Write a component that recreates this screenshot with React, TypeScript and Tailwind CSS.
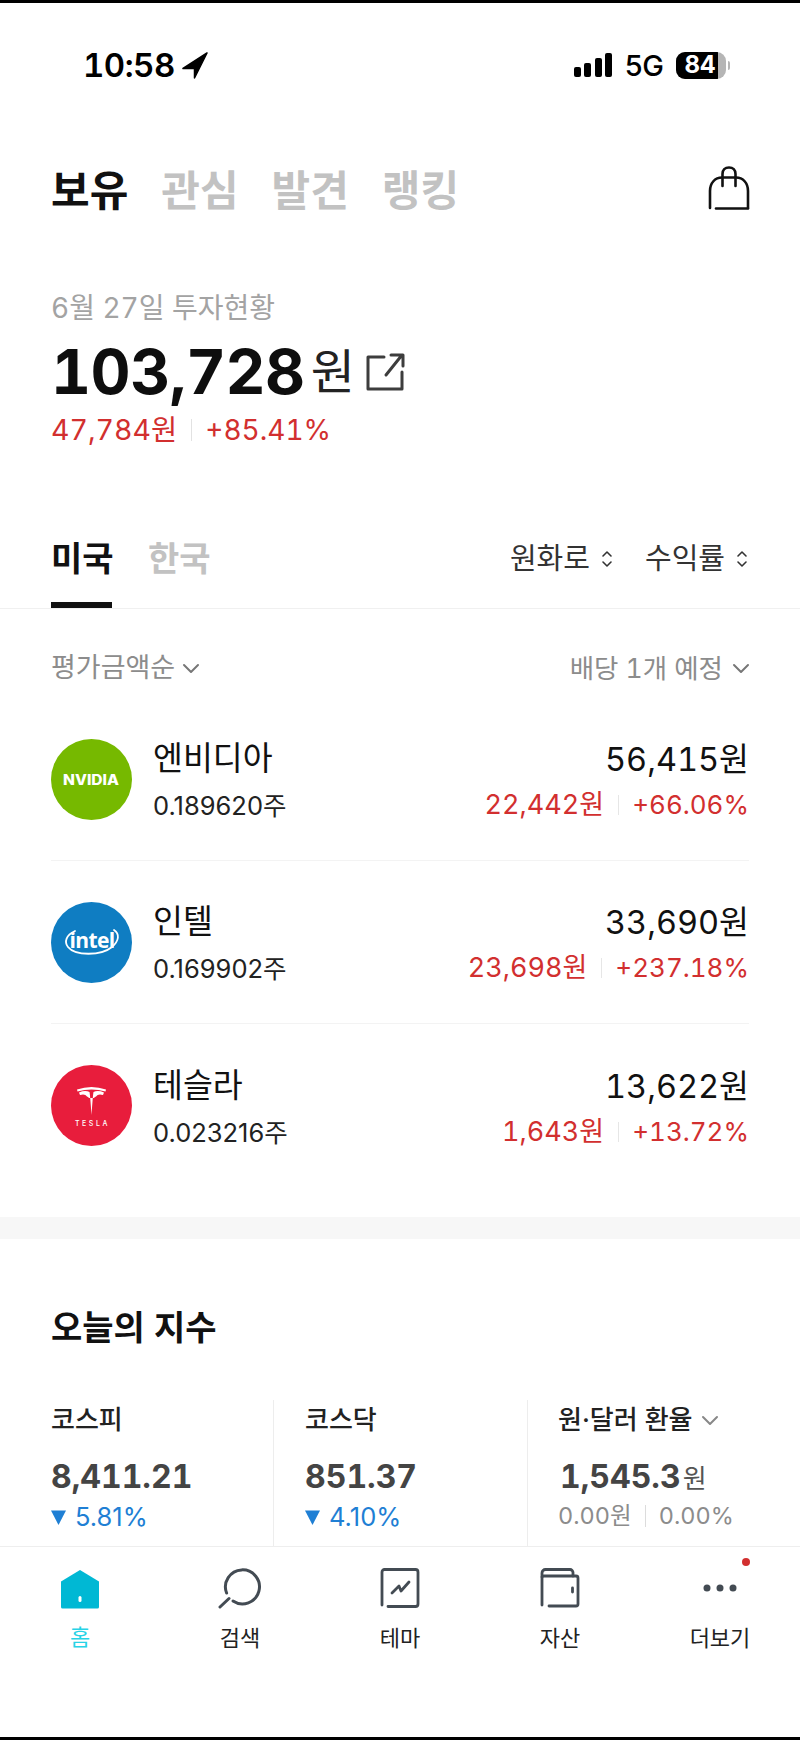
const holdings = [
  { logo: "nvidia", name: "엔비디아", qty: "0.189620주", value: "56,415원", profit: "22,442원", rate: "+66.06%" },
  { logo: "intel", name: "인텔", qty: "0.169902주", value: "33,690원", profit: "23,698원", rate: "+237.18%" },
  { logo: "tesla", name: "테슬라", qty: "0.023216주", value: "13,622원", profit: "1,643원", rate: "+13.72%" },
];

function Logo({ kind }: { kind: string }) {
  if (kind === "nvidia") {
    return (
      <svg width="81" height="81" viewBox="0 0 81 81" className="shrink-0">
        <circle cx="40.5" cy="40.5" r="40.5" fill="#76b900" />
        <text x="12" y="46" textLength="56" lengthAdjust="spacingAndGlyphs" fill="#fff" fontFamily="Inter" fontWeight="800" fontSize="14">
          NVIDIA
        </text>
      </svg>
    );
  }
  if (kind === "intel") {
    return (
      <svg width="81" height="81" viewBox="0 0 81 81" className="shrink-0">
        <circle cx="40.5" cy="40.5" r="40.5" fill="#0f7dc2" />
        <path d="M24 29C15 33 13 40 17 45C24 54 50 54 61 45C68 39 69 32 63 28" fill="none" stroke="#fff" strokeWidth="1.8" strokeLinecap="round" />
        <text x="41" y="46" textAnchor="middle" fill="#fff" fontFamily="Open Sans" fontWeight="700" fontSize="21" letterSpacing="-0.6">
          intel
        </text>
      </svg>
    );
  }
  return (
    <svg width="81" height="81" viewBox="0 0 81 81" className="shrink-0">
      <circle cx="40.5" cy="40.5" r="40.5" fill="#e81d3c" />
      <path d="M26 24.5Q40.5 19.5 55 24.5L54.5 26.500Q40.5 22.500 26.500 26.500Z" fill="#fff" />
      <path d="M28 27.500Q34 25 38.500 27Q39 28.500 40.500 50Q42 28.500 42.500 27Q47 25 53 27.500L52 30Q47 28.500 45 31.500Q43.500 32 43 33H38Q37.500 32 36 31.500Q34 28.500 29 30Z" fill="#fff" />
      <text x="41.500" y="60.500" textAnchor="middle" fill="#fff" fontFamily="Inter" fontWeight="500" fontSize="7" letterSpacing="2.6">
        TESLA
      </text>
    </svg>
  );
}

function ChevronDown({ className = "" }: { className?: string }) {
  return (
    <svg width="18" height="11" viewBox="0 0 18 11" fill="none" stroke="currentColor" strokeWidth="2" strokeLinecap="round" strokeLinejoin="round" className={className}>
      <path d="M2 2l7 7 7-7" />
    </svg>
  );
}

function UpDown() {
  return (
    <svg width="12" height="18" viewBox="0 0 12 18" fill="none" stroke="#333" strokeWidth="1.6" strokeLinecap="round" strokeLinejoin="round">
      <path d="M2 6l4-4 4 4M2 12l4 4 4-4" />
    </svg>
  );
}

function Down() {
  return (
    <svg width="15" height="15" viewBox="0 0 15 15" className="shrink-0">
      <path d="M0 0.5h15L7.500 15Z" fill="#1f7fd4" />
    </svg>
  );
}

const navIcon = "stroke-[#434b53] fill-none";

export default function App() {
  return (
    <div className="h-[1740px] w-[800px] flex flex-col overflow-hidden bg-white border-y-[3px] border-black tabular-nums font-['Inter','Noto_Sans_CJK_KR',sans-serif] text-[#111]">
      <main className="flex-1 overflow-hidden">
        {/* status bar */}
        <div className="h-[124px] flex items-center justify-between pl-[83px] pr-[70px]">
          <div className="flex items-center gap-[7px]">
            <span className="text-[33px] font-semibold leading-none text-black tracking-[-0.5px]">10:58</span>
            <svg width="26" height="27" viewBox="0 0 26 27">
              <path d="M25 1L1 16.5H12.5V26Z" fill="#000" stroke="#000" strokeWidth="1.5" strokeLinejoin="round" />
            </svg>
          </div>
          <div className="flex items-center">
            <svg width="38" height="24" viewBox="0 0 38 24" fill="#000">
              <rect x="0" y="14" width="7" height="10" rx="2" />
              <rect x="10" y="10" width="7" height="14" rx="2" />
              <rect x="21" y="5" width="7" height="19" rx="2" />
              <rect x="31" y="0" width="7" height="24" rx="2" />
            </svg>
            <span className="ml-[13px] text-[29px] font-medium leading-none text-black tracking-[-1px]">5G</span>
            <div className="ml-[13px] w-[50px] h-[27px] rounded-[9px] overflow-hidden bg-[#b5b5b5]">
              <div className="w-[42px] h-full bg-black flex items-center justify-center pl-[6px] text-white text-[24px] font-bold leading-none">84</div>
            </div>
            <div className="ml-[2px] w-[2px] h-[9px] rounded-r bg-[#b5b5b5]" />
          </div>
        </div>

        {/* top tabs */}
        <div className="h-[130px] flex items-center justify-between pl-[51px] pr-[49px]">
          <div className="flex gap-[33px] text-[42px] font-bold leading-none text-[#c2c2c2] -mt-[2px]">
            <span className="text-[#111]">보유</span>
            <span>관심</span>
            <span>발견</span>
            <span>랭킹</span>
          </div>
          <svg className="mb-[8px]" width="44" height="46" viewBox="0 0 44 46" fill="none" stroke="#111" strokeWidth="2.6" strokeLinecap="round">
            <path d="M3 43V26C3 18 8 12.5 15 12.5H29C36 12.5 41 18 41 26V43" />
            <path d="M9 43.5H41" />
            <path d="M15.5 21V9C15.5 5 18 2.5 22 2.5S28.5 5 28.5 9V21" />
          </svg>
        </div>

        {/* summary */}
        <section className="pl-[51px] pt-[33px] h-[253px]">
          <div className="text-[28px] leading-[36px] text-[#a3a3a3]">6월 27일 투자현황</div>
          <div className="mt-[10px] h-[72px] flex items-center">
            <span className="text-[62px] font-bold leading-none text-[#0e0e0e] tracking-[-0.5px]">103,728</span>
            <span className="ml-[6px] text-[48px] leading-none text-[#222]">원</span>
            <svg className="ml-[10px]" width="40" height="40" viewBox="0 0 40 40" fill="none" stroke="#3d3d3d" strokeWidth="3" strokeLinecap="round" strokeLinejoin="round">
              <path d="M19 5H3V37H37V20" />
              <path d="M21 23L37 3M26 3H38V14" />
            </svg>
          </div>
          <div className="mt-[4px] flex items-center text-[28.5px] leading-[36px] text-[#d22f2f]">
            <span>47,784원</span>
            <span className="ml-[14px] mr-[13px] w-px h-[22px] bg-[#e2e2e2]" />
            <span className="text-[28px]">+85.41%</span>
          </div>
        </section>

        {/* market tabs */}
        <div className="h-[99px] flex justify-between pl-[51px] pr-[52px] border-b border-[#f0f0f0]">
          <div className="flex gap-[36px] text-[34px] font-bold leading-[40px]">
            <span className="h-full w-[61px] pt-[29px] border-b-[6px] border-[#111] whitespace-nowrap">미국</span>
            <span className="pt-[29px] text-[#c2c2c2]">한국</span>
          </div>
          <div className="flex pt-[29px] gap-[32px] text-[29px] leading-[40px] text-[#333]">
            <div className="flex items-center h-[40px] gap-[11px]">
              <span>원화로</span>
              <UpDown />
            </div>
            <div className="flex items-center h-[40px] gap-[11px]">
              <span>수익률</span>
              <UpDown />
            </div>
          </div>
        </div>

        {/* sort row */}
        <div className="h-[89px] pt-[41px] flex items-start justify-between pl-[51px] pr-[50px] text-[27px] leading-[36px] text-[#8c8c8c]">
          <div className="flex items-center gap-[7px]">
            <span>평가금액순</span>
            <ChevronDown className="text-[#777]" />
          </div>
          <div className="flex items-center gap-[9px]">
            <span className="text-[26.5px]">배당 1개 예정</span>
            <ChevronDown className="text-[#777]" />
          </div>
        </div>

        {/* holdings */}
        <div className="mx-[51px]">
          {holdings.map((h, i) => (
            <div key={h.name} className={"h-[163px] flex items-center " + (i < 2 ? "border-b border-[#f3f3f3]" : "")}>
              <Logo kind={h.logo} />
              <div className="ml-[21px] pt-[5px] flex flex-col">
                <span className="text-[32.5px] leading-[40px] text-[#111]">{h.name}</span>
                <span className="mt-[9px] text-[25.5px] leading-[36px] text-[#222] normal-nums">{h.qty}</span>
              </div>
              <div className="ml-auto pt-[5px] flex flex-col items-end">
                <span className="text-[32.5px] leading-[40px] text-[#111]">{h.value}</span>
                <div className="mt-[7px] flex items-center text-[27px] leading-[36px] text-[#d22f2f]">
                  <span>{h.profit}</span>
                  <span className="ml-[14px] mr-[13px] w-px h-[20px] bg-[#e6e6e6]" />
                  <span className="text-[26px]">{h.rate}</span>
                </div>
              </div>
            </div>
          ))}
        </div>

        <div className="mt-[30px] h-[22px] bg-[#f7f7f7]" />

        {/* today's index */}
        <section>
          <h2 className="pl-[51px] pt-[67px] text-[34px] font-semibold leading-[44px] text-[#111]">오늘의 지수</h2>
          <div className="mt-[50px] flex h-[200px] text-[#222]">
            <div className="w-[274px] pl-[51px] border-r border-[#ededed]">
              <div className="text-[26px] font-medium leading-[36px] pt-[2px]">코스피</div>
              <div className="mt-[17px] text-[32px] font-bold leading-[44px] text-[#444]">8,411.21</div>
              <div className="flex items-center gap-[9px] text-[25.5px] leading-[36px] text-[#1f7fd4] normal-nums">
                <Down />
                <span>5.81%</span>
              </div>
            </div>
            <div className="w-[254px] pl-[31px] border-r border-[#ededed]">
              <div className="text-[26px] font-medium leading-[36px] pt-[2px]">코스닥</div>
              <div className="mt-[17px] text-[32px] font-bold leading-[44px] text-[#444]">851.37</div>
              <div className="flex items-center gap-[9px] text-[25.5px] leading-[36px] text-[#1f7fd4] normal-nums">
                <Down />
                <span>4.10%</span>
              </div>
            </div>
            <div className="pl-[30px]">
              <div className="flex items-center gap-[9px] pt-[2px]">
                <span className="text-[26px] font-medium leading-[36px]">원·달러 환율</span>
                <ChevronDown className="text-[#888]" />
              </div>
              <div className="mt-[17px] flex items-baseline pl-[2px]">
                <span className="text-[32px] font-bold leading-[44px] text-[#444]">1,545.3</span>
                <span className="ml-[2px] text-[26px] leading-[44px] text-[#555]">원</span>
              </div>
              <div className="-mt-[3px] flex items-center text-[23.5px] leading-[36px] text-[#8c8c8c]">
                <span>0.00원</span>
                <span className="mx-[13px] w-px h-[22px] bg-[#dcdcdc]" />
                <span>0.00%</span>
              </div>
            </div>
          </div>
        </section>
      </main>

      {/* bottom nav */}
      <nav className="h-[191px] shrink-0 bg-white border-t border-[#eeeeee] flex text-[22px] leading-[30px] text-[#222]">
        <div className="w-[160px] flex flex-col items-center pt-[22px]">
          <svg width="40" height="40" viewBox="0 0 40 40">
            <path d="M20 1L39 12.5V38A1.5 1.5 0 0 1 37.5 39.5H2.5A1.5 1.5 0 0 1 1 38V12.5Z" fill="#00b8d4" />
            <rect x="18.5" y="27" width="3" height="6" rx="1.5" fill="#fff" />
          </svg>
          <span className="mt-[13px] text-[#27d3e6]">홈</span>
        </div>
        <div className="w-[160px] flex flex-col items-center pt-[19px]">
          <svg width="44" height="44" viewBox="0 0 44 44" className={navIcon} strokeWidth="3" strokeLinecap="round">
            <path d="M15 35A17 17 0 1 0 8.6 27" />
            <path d="M2 41L11 32.5" />
          </svg>
          <span className="mt-[13px]">검색</span>
        </div>
        <div className="w-[160px] flex flex-col items-center pt-[21px]">
          <svg width="40" height="40" viewBox="0 0 40 40" className={navIcon} strokeWidth="2.8" strokeLinecap="round" strokeLinejoin="round">
            <path d="M2 37V4A2.5 2.5 0 0 1 4.5 1.5H35.5A2.5 2.5 0 0 1 38 4V36A2.5 2.5 0 0 1 35.5 38.5H8" />
            <path d="M12 25L19 18L21 23L29 14" />
          </svg>
          <span className="mt-[15px]">테마</span>
        </div>
        <div className="w-[160px] flex flex-col items-center pt-[21px]">
          <svg width="40" height="40" viewBox="0 0 40 40" className={navIcon} strokeWidth="2.8" strokeLinecap="round" strokeLinejoin="round">
            <path d="M2 37V5A3.5 3.5 0 0 1 5.500 1.500H30A3 3 0 0 1 33 4.500V8" />
            <path d="M2 9A2 2 0 0 1 4 8H36A2 2 0 0 1 38 10V36A2 2 0 0 1 36 38H9" />
            <path d="M32.500 20V24" />
          </svg>
          <span className="mt-[15px]">자산</span>
        </div>
        <div className="relative w-[160px] flex flex-col items-center pt-[21px]">
          <svg width="40" height="40" viewBox="0 0 40 40" fill="#434b53">
            <circle cx="7" cy="20" r="3.500" />
            <circle cx="20" cy="20" r="3.500" />
            <circle cx="33" cy="20" r="3.500" />
          </svg>
          <span className="mt-[15px]">더보기</span>
          <span className="absolute top-[11px] left-[102px] w-[8px] h-[8px] rounded-full bg-[#d22f2f]" />
        </div>
      </nav>
    </div>
  );
}
